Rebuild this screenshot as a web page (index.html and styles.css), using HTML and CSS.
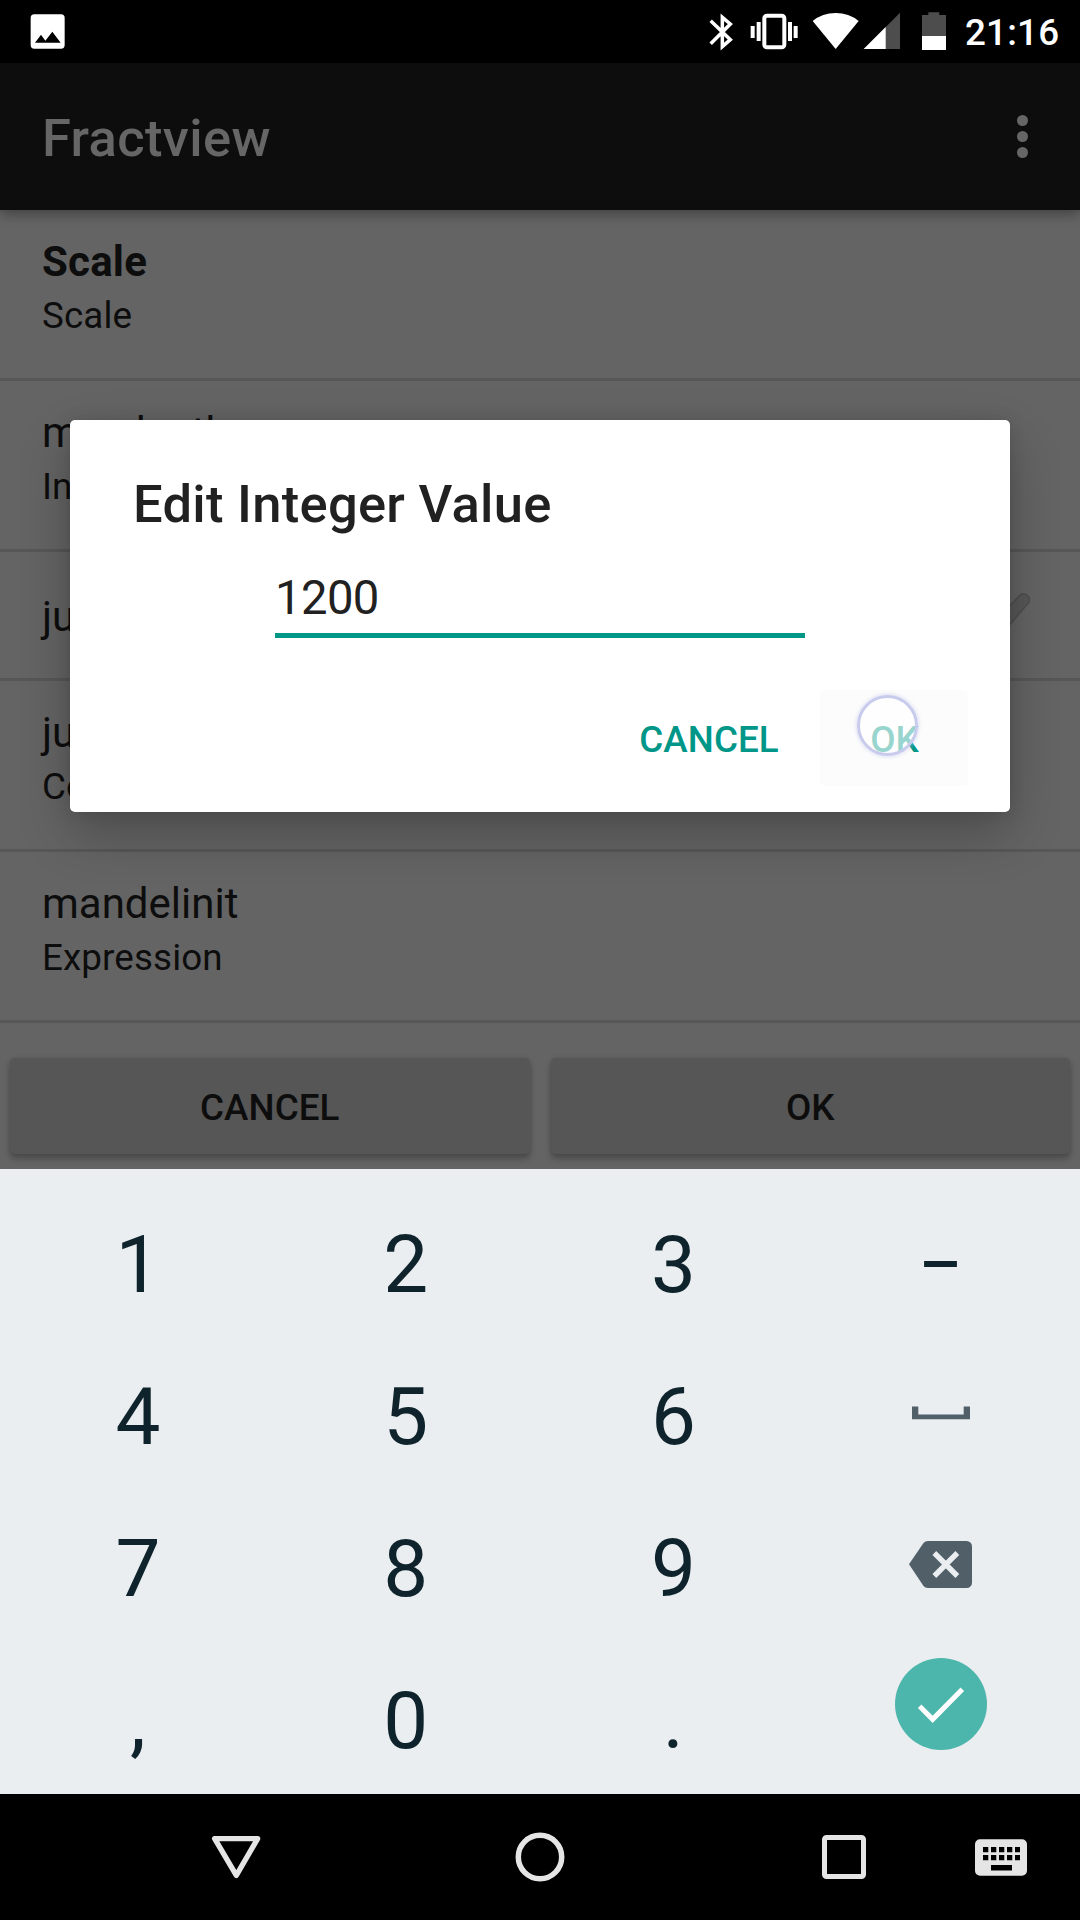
FILE: index.html
```html
<!DOCTYPE html>
<html lang="en">
<head>
<meta charset="utf-8">
<title>Fractview</title>
<link rel="stylesheet" href="styles.css">
</head>
<body>
<div class="screen">
  <header class="status">
    <svg class="status-icon" width="36" height="63" viewBox="90 0 108 189">
      <path fill="#fff" fill-rule="evenodd" d="M103 43h80a11 11 0 0 1 11 11v81a11 11 0 0 1-11 11h-80a11 11 0 0 1-11-11V54a11 11 0 0 1 11-11zM105 128h77l-25-33-21 27-13-18z"/>
    </svg>
    <div class="status-right">
      <svg class="bt" width="25" height="63" viewBox="56 0 75 189">
        <path fill="none" stroke="#fff" stroke-width="10.500" d="M61 62l59 57-24 21V52l24 20-59 59"/>
      </svg>
      <svg class="vibrate" width="48" height="63" viewBox="181 0 144 189">
        <rect x="224" y="47" width="60" height="95" rx="8" fill="none" stroke="#fff" stroke-width="12"/>
        <path fill="#fff" d="M183 78h12v36h-12zM201 66h12v57h-12zM295 66h12v57h-12zM312 78h12v36h-12z"/>
      </svg>
      <svg class="wifi" width="48" height="63" viewBox="367 0 144 189">
        <path fill="#fff" d="M438 147L369 63Q398 39 438 39T507 63z"/>
      </svg>
      <svg class="signal" width="38" height="63" viewBox="520 0 114 189">
        <path fill="#4d4d4d" d="M631 38v109H522z"/>
        <path fill="#fff" d="M588 81v66H522z"/>
      </svg>
      <svg class="battery" width="24" height="63" viewBox="696 0 72 189">
        <path fill="#4d4d4d" d="M696 45h19v-8h33v8h20v64h-72z"/>
        <path fill="#fff" d="M696 108h72v42h-72z"/>
      </svg>
      <span class="clock">21:16</span>
    </div>
  </header>

  <main class="app">
    <div class="app-bar">
      <h1 class="app-title">Fractview</h1>
      <div class="overflow"><i></i><i></i><i></i></div>
    </div>
    <div class="list">
      <div class="row"><div class="name strong">Scale</div><div class="type">Scale</div></div>
      <div class="row"><div class="name">maxdepth</div><div class="type">Int</div></div>
      <div class="row single">
        <div class="name">juliaset</div>
        <svg class="pencil" width="60" height="60" viewBox="0 0 60 60">
          <path d="M16 36L45 5a6 6 0 0 1 9 7L26 45" fill="#585858" stroke="#4f4f4f" stroke-width="1.6"/>
        </svg>
      </div>
      <div class="row"><div class="name">juliapoint</div><div class="type">Complex</div></div>
      <div class="row"><div class="name">mandelinit</div><div class="type">Expression</div></div>
    </div>
    <div class="actions">
      <div class="action">CANCEL</div>
      <div class="action">OK</div>
    </div>

    <section class="dialog">
      <h2 class="dialog-title">Edit Integer Value</h2>
      <div class="field">1200</div>
      <div class="dialog-actions">
        <div class="dialog-btn">CANCEL</div>
        <div class="dialog-btn pressed">OK<span class="touch"></span></div>
      </div>
    </section>
  </main>

  <section class="keyboard">
    <div class="key">1</div><div class="key">2</div><div class="key">3</div><div class="key dash">–</div>
    <div class="key">4</div><div class="key">5</div><div class="key">6</div>
    <div class="key icon space">
      <svg width="58" height="14" viewBox="0 0 58 14"><path fill="#505f68" d="M0 .5h6.3V8.500h45.400V.5H58V13.300H0z"/></svg>
    </div>
    <div class="key">7</div><div class="key">8</div><div class="key">9</div>
    <div class="key icon erase">
      <svg width="63" height="47" viewBox="207 543 189 141">
        <path fill="#505f68" d="M264 543h116a16 16 0 0 1 16 16v109a16 16 0 0 1-16 16H264q-9 0-14-7L207 613l43-63q5-7 14-7z"/>
        <path stroke="#eaeef1" stroke-width="16" d="M283 579l69 69M352 579l-69 69"/>
      </svg>
    </div>
    <div class="key">,</div><div class="key">0</div><div class="key">.</div>
    <div class="key icon done">
      <svg width="92" height="92" viewBox="165 894 276 276">
        <circle cx="303" cy="1032" r="138" fill="#4db6ac"/>
        <path fill="none" stroke="#fff" stroke-width="15" d="M239 1039l39 39 89-90"/>
      </svg>
    </div>
  </section>

  <nav class="nav">
    <svg width="52" height="52" viewBox="90 153 156 156">
      <path fill="none" stroke="#e5e5e5" stroke-width="16" stroke-linejoin="round" d="M104 176H233L169 286z"/>
    </svg>
    <svg width="52" height="52" viewBox="0 0 52 52">
      <circle cx="26" cy="26" r="21.700" fill="none" stroke="#e5e5e5" stroke-width="5.500"/>
    </svg>
    <svg width="52" height="52" viewBox="0 0 52 52">
      <rect x="6.500" y="6.500" width="39" height="39" rx="2" fill="none" stroke="#e5e5e5" stroke-width="5"/>
    </svg>
    <svg class="ime" width="54" height="38" viewBox="0 0 54 38">
      <path fill="#e5e5e5" fill-rule="evenodd" d="M6 1.200h42a5 5 0 0 1 5 5v26.500a5 5 0 0 1-5 5H6a5 5 0 0 1-5-5V6.200a5 5 0 0 1 5-5zM9 9v5.300h5.300V9zM17 9v5.300h5.300V9zM25 9v5.300h5.300V9zM33 9v5.300h5.300V9zM41 9v5.300h5V9zM9 17v5.300h5.300V17zM17 17v5.300h5.300V17zM25 17v5.300h5.300V17zM33 17v5.300h5.300V17zM41 17v5.300h5V17zM17 27v5.500h21V27z"/>
    </svg>
  </nav>
</div>
</body>
</html>
```

FILE: styles.css
```css
* { box-sizing: border-box; }

body {
  margin: 0;
  background: #000;
  font-family: Roboto, sans-serif;
}

svg { display: block; flex: none; }

.screen {
  width: 1080px;
  height: 1920px;
  display: flex;
  flex-direction: column;
  overflow: hidden;
}

/* Status bar */
.status {
  flex: none;
  height: 63px;
  padding: 0 22px 0 30px;
  display: flex;
  justify-content: space-between;
  background: #000;
}
.status-right { display: flex; align-items: flex-start; }
.bt { position: relative; left: 1px; }
.vibrate { margin-left: 17px; }
.wifi { margin-left: 14px; }
.signal { margin-left: 3px; }
.battery { margin-left: 21px; }
.clock {
  width: 93px;
  margin-left: 19px;
  color: #fff;
  font-size: 36.750px;
  font-weight: 500;
  letter-spacing: .2px;
  line-height: 66px;
  white-space: nowrap;
}

/* App behind the dialog */
.app {
  position: relative;
  flex: none;
  height: 1106px;
  display: flex;
  flex-direction: column;
  background: #646464;
  color: #0d0d0d;
}
.app-bar {
  position: relative;
  flex: none;
  height: 147px;
  padding: 0 52px 0 42px;
  display: flex;
  align-items: center;
  justify-content: space-between;
  background: #0d0d0d;
  box-shadow: 0 4px 12px rgba(0, 0, 0, .35);
}
.app-title {
  margin: 3px 0 0;
  color: #666;
  font-size: 52.500px;
  font-weight: 500;
  letter-spacing: .35px;
  line-height: 62px;
}
.overflow { display: flex; flex-direction: column; gap: 5px; }
.overflow i {
  width: 11px;
  height: 11px;
  border-radius: 50%;
  background: #666;
}
.row {
  height: 171px;
  padding: 24px 42px 0;
  border-bottom: 3px solid #575757;
}
.single {
  height: 129px;
  padding: 37px 42px 0;
  display: flex;
  justify-content: space-between;
}
.pencil { margin: 1px 3px 0 0; }
.name { font-size: 42px; line-height: 56px; }
.strong { font-weight: 700; letter-spacing: .2px; }
.type { margin-top: 4px; font-size: 36.750px; letter-spacing: .12px; line-height: 44px; }

.actions {
  display: grid;
  grid-template-columns: 1fr 1fr;
  gap: 21px;
  padding: 35px 10px 0;
}
.action {
  height: 96px;
  border-radius: 5px;
  background: #565656;
  box-shadow: 0 5px 6px rgba(0, 0, 0, .24), 0 0 4px rgba(0, 0, 0, .12);
  font-size: 36.750px;
  font-weight: 500;
  letter-spacing: .1px;
  line-height: 100px;
  text-align: center;
}

/* Dialog */
.dialog {
  position: absolute;
  left: 70px;
  top: 357px;
  width: 940px;
  height: 392px;
  padding: 52px 42px 26px 63px;
  display: flex;
  flex-direction: column;
  border-radius: 5px;
  background: #fff;
  color: #212121;
  box-shadow: 0 22px 52px rgba(0, 0, 0, .24), 0 0 16px rgba(0, 0, 0, .12);
}
.dialog-title {
  margin: 0;
  font-size: 52.500px;
  font-weight: 500;
  letter-spacing: .28px;
  line-height: 64px;
}
.field {
  width: 530px;
  height: 68px;
  margin: 34px 0 0 142px;
  border-bottom: 5px solid #009688;
  font-size: 47.250px;
  letter-spacing: -.6px;
  line-height: 56px;
}
.dialog-actions {
  display: flex;
  justify-content: flex-end;
  gap: 19px;
  margin-top: auto;
}
.dialog-btn {
  position: relative;
  width: 184px;
  height: 96px;
  color: #009688;
  font-size: 36.750px;
  font-weight: 500;
  letter-spacing: .1px;
  line-height: 100px;
  text-align: center;
}
.pressed {
  width: 148px;
  padding-left: 1px;
  border-radius: 5px;
  background: #fcfcfc;
}
.touch {
  position: absolute;
  left: 37px;
  top: 5px;
  width: 61px;
  height: 61px;
  border: 3px solid #c8cbec;
  border-radius: 50%;
  background: rgba(255, 255, 255, .6);
  box-shadow: 0 0 4px rgba(193, 197, 234, .8);
}

/* Numeric keyboard */
.keyboard {
  flex: none;
  height: 625px;
  padding: 14px 5px 0 4px;
  display: grid;
  grid-template-columns: repeat(4, 1fr);
  grid-template-rows: repeat(4, 152px);
  background: #eaeef1;
}
.key {
  padding-top: 12px;
  color: #0e232c;
  font-size: 80px;
  line-height: 140px;
  text-align: center;
}
.dash { transform: scaleX(.84); }
.icon { display: flex; justify-content: center; }
.space { padding: 71px 1px 0 0; }
.erase { padding: 54px 2px 0 0; }
.done { padding-top: 19px; }

/* Navigation bar */
.nav {
  height: 126px;
  padding: 37px 0 0 210px;
  display: flex;
  gap: 252px;
  background: #000;
}
.ime { margin: 7px 0 0 -148px; }
```
